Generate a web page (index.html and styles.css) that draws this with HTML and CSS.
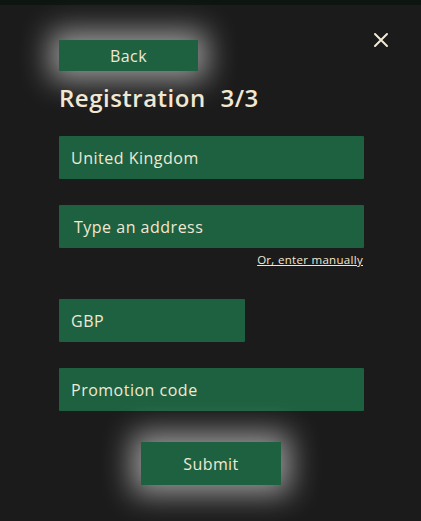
FILE: index.html
```html
<!DOCTYPE html>
<html>
<head>
<meta charset="utf-8">
<link rel="stylesheet" href="styles.css">
</head>
<body>
<div class="topbar"></div>
<div class="panel">
  <button class="close" aria-label="Close">
    <svg width="16" height="16" viewBox="0 0 16 16"><path d="M2 2L14 14M14 2L2 14" stroke="#f3ead6" stroke-width="2" stroke-linecap="round"/></svg>
  </button>
  <button class="btn back">Back</button>
  <h1 class="title">Registration <span class="step">3/3</span></h1>
  <div class="field full first">United Kingdom</div>
  <div class="addr">
    <div class="field full addr-field">Type an address</div>
    <a class="manual" href="#">Or, enter manually</a>
  </div>
  <div class="field short">GBP</div>
  <div class="field full">Promotion code</div>
  <div class="submit-row"><button class="btn submit">Submit</button></div>
</div>
</body>
</html>
```
FILE: styles.css
```css
html, body {
  margin: 0;
  padding: 0;
  background: #1b1b1b;
  height: 100%;
}
body {
  font-family: "Open Sans", "Noto Sans", sans-serif;
  color: #f1e8d4;
  overflow: hidden;
}
.topbar {
  height: 5px;
  background: #0d1511;
}
.panel {
  position: relative;
  padding: 35px 58px 0 59px;
  display: flex;
  flex-direction: column;
  background: #1b1b1b;
}
.close {
  position: absolute;
  top: 27px;
  right: 32px;
  background: none;
  border: 0;
  padding: 0;
  width: 16px;
  height: 16px;
}
.btn {
  background: #1d6140;
  border: 0;
  color: #f1e8d4;
  font-family: inherit;
  font-size: 16px;
  letter-spacing: 0.4px;
  box-shadow: 0 0 30px 9px rgba(235, 235, 235, 0.62);
  padding: 0;
}
.back {
  width: 139px;
  height: 31px;
  align-self: flex-start;
}
.title {
  margin: 11px 0 0 0;
  font-size: 24px;
  font-weight: 600;
  line-height: 32px;
  letter-spacing: 0.5px;
}
.step {
  margin-left: 8px;
}
.field {
  background: #1d6140;
  height: 43px;
  box-sizing: border-box;
  padding: 0 12px;
  display: flex;
  align-items: center;
  font-size: 16px;
  letter-spacing: 0.5px;
  border-radius: 1px;
}
.full { width: 305px; margin-top: 26px; }
.full.first { margin-top: 22px; }
.addr { display: flex; flex-direction: column; margin-top: 26px; }
.addr .addr-field { margin-top: 0; padding-left: 15px; }
.manual {
  align-self: flex-end;
  color: #f1e8d4;
  font-size: 11.5px;
  letter-spacing: 0.3px;
  margin-top: 5px;
  margin-right: 0;
  line-height: 14px;
}
.short { width: 186px; margin-top: 32px; }
.submit-row {
  display: flex;
  justify-content: flex-start;
  padding-left: 82px;
  margin-top: 31px;
}
.submit {
  width: 140px;
  height: 43px;
}
```
